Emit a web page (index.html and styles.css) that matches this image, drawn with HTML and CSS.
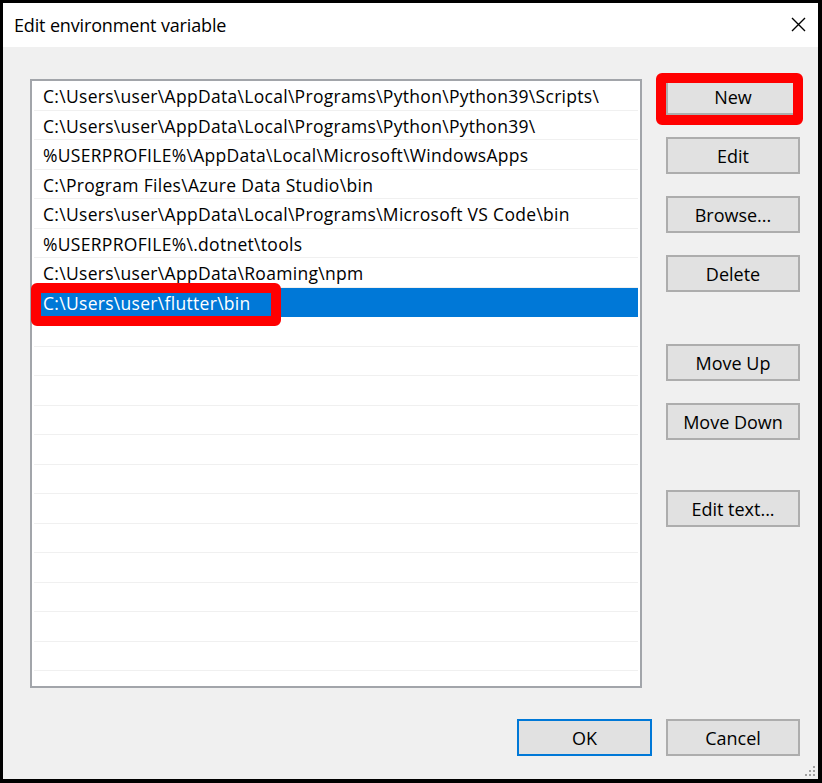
FILE: index.html
```html
<!DOCTYPE html>
<html lang="en">

<head>
    <meta charset="UTF-8">
    <title>Edit environment variable</title>
    <link rel="stylesheet" href="styles.css">
</head>

<body>
    <div class="window">
        <div class="titlebar">
            <span class="title">Edit environment variable</span>
            <svg class="close" width="15" height="15" viewBox="0 0 15 15">
                <path d="M1 1L14 14M14 1L1 14" />
            </svg>
        </div>
        <div class="content">
            <div class="main">
                <ul class="list">
                    <li class="row">C:\Users\user\AppData\Local\Programs\Python\Python39\Scripts\</li>
                    <li class="row">C:\Users\user\AppData\Local\Programs\Python\Python39\</li>
                    <li class="row">%USERPROFILE%\AppData\Local\Microsoft\WindowsApps</li>
                    <li class="row">C:\Program Files\Azure Data Studio\bin</li>
                    <li class="row">C:\Users\user\AppData\Local\Programs\Microsoft VS Code\bin</li>
                    <li class="row">%USERPROFILE%\.dotnet\tools</li>
                    <li class="row">C:\Users\user\AppData\Roaming\npm</li>
                    <li class="row selected">C:\Users\user\flutter\bin</li>
                    <li class="row"></li>
                    <li class="row"></li>
                    <li class="row"></li>
                    <li class="row"></li>
                    <li class="row"></li>
                    <li class="row"></li>
                    <li class="row"></li>
                    <li class="row"></li>
                    <li class="row"></li>
                    <li class="row"></li>
                    <li class="row"></li>
                    <li class="row"></li>
                    <li class="row"></li>
                </ul>
                <div class="actions">
                    <button class="btn">New</button>
                    <button class="btn">Edit</button>
                    <button class="btn">Browse...</button>
                    <button class="btn">Delete</button>
                    <button class="btn move-up">Move Up</button>
                    <button class="btn">Move Down</button>
                    <button class="btn edit-text">Edit text...</button>
                </div>
            </div>
            <div class="footer">
                <button class="btn ok">OK</button>
                <button class="btn">Cancel</button>
            </div>
        </div>

        <!-- red highlight marks -->
        <span class="mark mark-new"></span>
        <span class="mark mark-path"></span>

        <svg class="grip" width="12" height="12" viewBox="0 0 12 12">
            <rect x="9" y="1" width="2" height="2" />
            <rect x="5" y="5" width="2" height="2" />
            <rect x="9" y="5" width="2" height="2" />
            <rect x="1" y="9" width="2" height="2" />
            <rect x="5" y="9" width="2" height="2" />
            <rect x="9" y="9" width="2" height="2" />
        </svg>
    </div>
</body>

</html>
```

FILE: styles.css
```css
body {
    margin: 0;
    font-family: "Open Sans", "Noto Sans", sans-serif;
    color: #000;
}

.window {
    position: relative;
    width: 822px;
    height: 783px;
    box-sizing: border-box;
    border-style: solid;
    border-color: #000;
    border-width: 3px 4px 4px 3px;
    background-color: #f0f0f0;
    overflow: hidden;
}

.titlebar {
    height: 44px;
    background-color: #fff;
    display: flex;
    align-items: center;
    justify-content: space-between;
    padding: 0 12px 0 11px;
}

.title {
    font-size: 18px;
    letter-spacing: -0.15px;
    margin-top: -1px;
}

.close {
    margin-top: -2px;
}

.close path {
    stroke: #000;
    stroke-width: 1.4;
    fill: none;
}

.content {
    padding: 32px 18px 0 27px;
}

.main {
    display: flex;
    gap: 24px;
}

.list {
    margin: 0;
    padding: 0 2px;
    list-style: none;
    width: 612px;
    height: 609px;
    box-sizing: border-box;
    border: 2px solid #a2a5aa;
    background-color: #fff;
    overflow: hidden;
}

.row {
    height: 29.5px;
    box-sizing: border-box;
    border-bottom: 1px solid #f0f0f0;
    padding: 1px 0 0 9px;
    font-size: 17.5px;
    letter-spacing: 0.3px;
    line-height: 28px;
    white-space: nowrap;
}

.row.selected {
    background-color: #0078d7;
    color: #fff;
    border-bottom-color: #0078d7;
}

.actions {
    display: flex;
    flex-direction: column;
    gap: 22px;
    margin-top: -1px;
    width: 134px;
}

.btn {
    width: 134px;
    height: 37px;
    box-sizing: border-box;
    border: 2px solid #adadad;
    background-color: #e1e1e1;
    font-family: "Open Sans", "Noto Sans", sans-serif;
    font-size: 18px;
    color: #000;
    padding: 0;
}

.move-up {
    margin-top: 30px;
}

.edit-text {
    margin-top: 28px;
}

.footer {
    display: flex;
    justify-content: flex-end;
    gap: 14px;
    margin-top: 31px;
}

.btn.ok {
    width: 135px;
    border-color: #0078d7;
}

.mark {
    position: absolute;
    box-sizing: border-box;
    border: 10px solid #ff0000;
    border-radius: 6px;
}

.mark-new {
    left: 653px;
    top: 70px;
    width: 147px;
    height: 52px;
}

.mark-path {
    left: 28px;
    top: 280px;
    width: 250px;
    height: 43px;
}

.grip {
    position: absolute;
    right: 2px;
    bottom: 2px;
}

.grip rect {
    fill: #a0a0a0;
}
```
